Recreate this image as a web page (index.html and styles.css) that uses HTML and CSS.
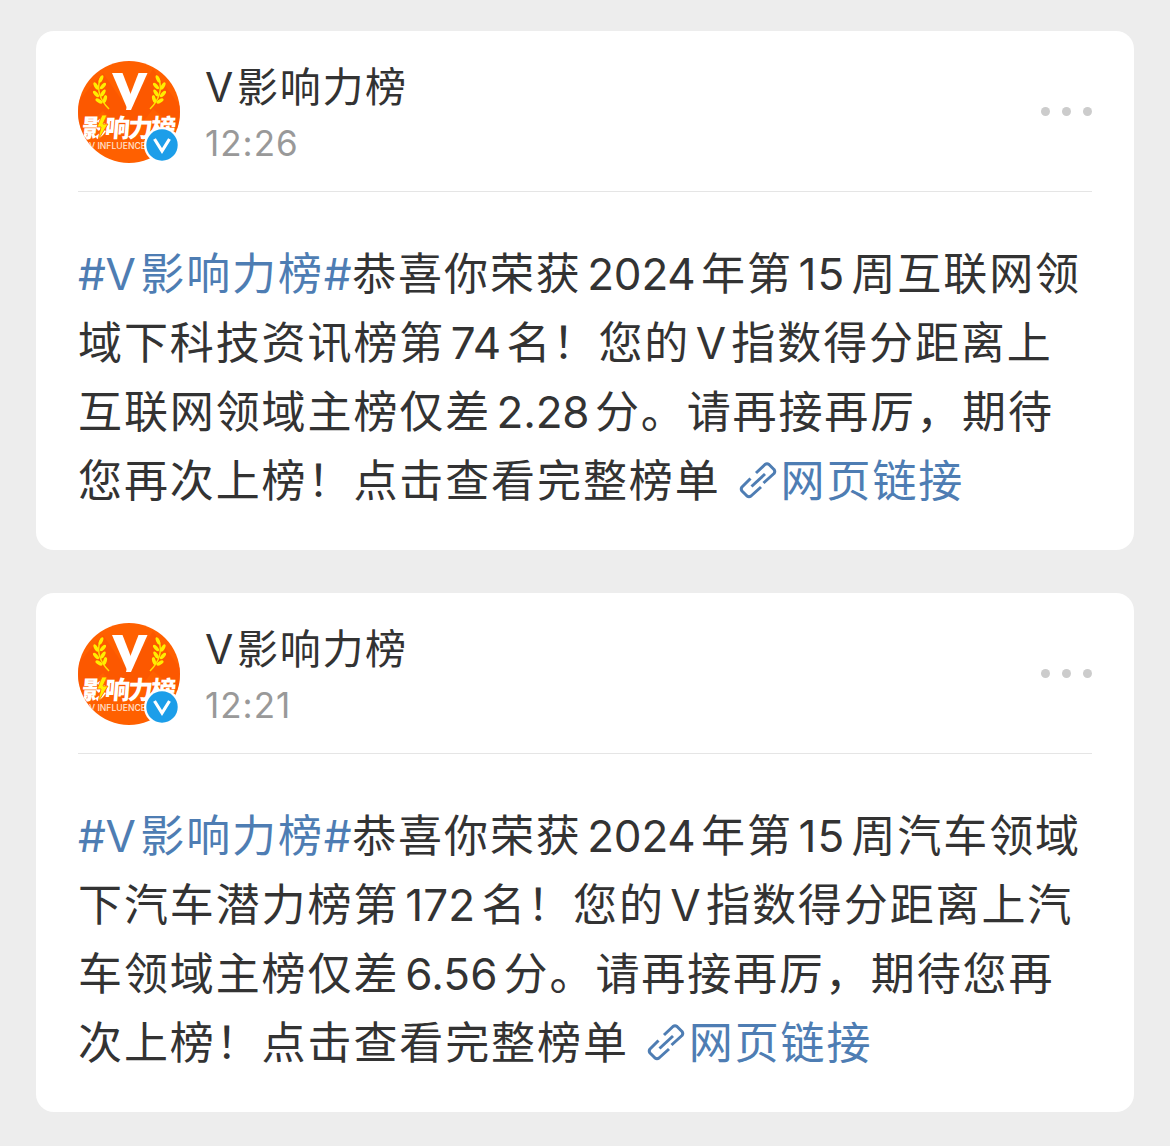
FILE: index.html
```html
<!DOCTYPE html>
<html lang="zh-CN">
<head>
  <meta charset="UTF-8">
  <meta name="viewport" content="width=device-width, initial-scale=1.0">
  <title>V影响力榜</title>
  <link rel="stylesheet" href="styles.css">
</head>
<body>
  <!-- Shared icons -->
  <svg class="symbols" width="0" height="0">
    <symbol id="avatar" viewBox="0 0 102 102">
      <clipPath id="round"><circle cx="51" cy="51" r="51"/></clipPath>
      <g clip-path="url(#round)">
        <rect width="102" height="102" fill="#ff6000"/>
        <path d="M0 40 25 12 50 48 75 8 102 45V70L75 48 50 80 25 50 0 72Z" fill="#fa5400" opacity=".6"/>
        <path d="M34 12H44.500L53 34 49 47Z" fill="#fff"/>
        <path d="M60.500 12H69.500L53 49H48L50.500 38Z" fill="#fff"/>
        <g id="wheat">
          <path d="M22 18Q17 34 31 48" stroke="#ffe000" stroke-width="1.5" fill="none"/>
          <g fill="#ffee00">
            <ellipse cx="23" cy="18" rx="1.800" ry="4" transform="rotate(25 23 18)"/>
            <ellipse cx="18" cy="25" rx="1.800" ry="4" transform="rotate(-30 18 25)"/>
            <ellipse cx="25" cy="25" rx="1.800" ry="4" transform="rotate(42 25 25)"/>
            <ellipse cx="18" cy="33" rx="1.800" ry="4" transform="rotate(-42 18 33)"/>
            <ellipse cx="25" cy="32" rx="1.800" ry="4" transform="rotate(32 25 32)"/>
            <ellipse cx="21" cy="40" rx="1.800" ry="4" transform="rotate(-58 21 40)"/>
            <ellipse cx="27" cy="38" rx="1.800" ry="4" transform="rotate(15 27 38)"/>
          </g>
        </g>
        <use href="#wheat" transform="translate(103 0) scale(-1 1)"/>
        <text class="logo-name" x="5" y="76" textLength="94" transform="translate(5 0) skewX(-5)">影响力榜</text>
        <path d="M24 54 19 66H23L20 79 30 63H25L29 54Z" fill="#ffee00" stroke="#ff6000" stroke-width=".8"/>
        <text class="logo-sub" x="11" y="87.5" textLength="57" lengthAdjust="spacingAndGlyphs">V INFLUENCE</text>
      </g>
    </symbol>
    <symbol id="verified" viewBox="0 0 36 36">
      <circle cx="18" cy="18" r="18" fill="#fff"/>
      <circle cx="18" cy="18" r="15.7" fill="#1c9ee9"/>
      <path d="M10.500 12 18 24 25.500 12" fill="none" stroke="#fff" stroke-width="3.2"/>
    </symbol>
    <symbol id="link" viewBox="0 0 38 38">
      <g fill="none" stroke="#4e7db3" stroke-width="3" stroke-linejoin="round">
        <path d="M17 12 26 3.500Q28 2 30 3.500L35 8.500Q36.500 10.500 35 12.500L24.500 22"/>
        <path d="M11.500 17.500 3 26Q1.500 28 3 30L8 35Q10 36.500 12 35L22 26"/>
        <path d="M12.500 25.500 26 13"/>
      </g>
    </symbol>
  </svg>

  <div class="feed">
    <div class="card">
      <div class="header">
        <div class="avatar">
          <svg class="photo"><use href="#avatar"/></svg>
          <svg class="badge"><use href="#verified"/></svg>
        </div>
        <div class="user">
          <div class="name"><span>V</span>影响力榜</div>
          <div class="time">12:26</div>
        </div>
        <div class="more"><i></i><i></i><i></i></div>
      </div>
      <p class="content">
        <a class="topic"><span class="hash">#</span><span class="v-first">V</span>影响力榜<span class="hash">#</span></a>恭喜你荣获<span class="num">2024</span>年第<span class="num week">15</span>周互联网领<br>
        域下科技资讯榜第<span class="num">74</span>名！您的<span class="num">V</span>指数得分距离上<br>
        互联网领域主榜仅差<span class="num">2.28</span>分。请再接再厉，期待<br>
        您再次上榜！点击查看完整榜单<a class="link"><svg><use href="#link"/></svg>网页链接</a>
      </p>
    </div>

    <div class="card">
      <div class="header">
        <div class="avatar">
          <svg class="photo"><use href="#avatar"/></svg>
          <svg class="badge"><use href="#verified"/></svg>
        </div>
        <div class="user">
          <div class="name"><span>V</span>影响力榜</div>
          <div class="time">12:21</div>
        </div>
        <div class="more"><i></i><i></i><i></i></div>
      </div>
      <p class="content">
        <a class="topic"><span class="hash">#</span><span class="v-first">V</span>影响力榜<span class="hash">#</span></a>恭喜你荣获<span class="num">2024</span>年第<span class="num week">15</span>周汽车领域<br>
        下汽车潜力榜第<span class="num wide">172</span>名！您的<span class="num">V</span>指数得分距离上汽<br>
        车领域主榜仅差<span class="num wide">6.56</span>分。请再接再厉，期待您再<br>
        次上榜！点击查看完整榜单<a class="link"><svg><use href="#link"/></svg>网页链接</a>
      </p>
    </div>
  </div>
</body>
</html>
```
FILE: styles.css
```css
body {
  margin: 0;
  background-color: #ededed;
  font-family: Inter, "Noto Sans CJK SC", sans-serif;
  color: #333;
}

.symbols {
  display: block;
}

.feed {
  display: flex;
  flex-direction: column;
  gap: 43px;
  padding: 31px 36px 34px;
}

.card {
  box-sizing: border-box;
  height: 519px;
  padding: 0 42px;
  background: #fff;
  border-radius: 18px;
}

.header {
  display: flex;
  box-sizing: border-box;
  height: 161px;
  padding-top: 30px;
  border-bottom: 1px solid #e5e5e5;
}

.avatar {
  position: relative;
  width: 102px;
  height: 102px;
}

.photo {
  display: block;
  width: 102px;
  height: 102px;
}

/* Verified mark over the avatar */
.badge {
  position: absolute;
  left: 66px;
  top: 66px;
  width: 36px;
  height: 36px;
}

.logo-name {
  font: 900 25px "Noto Sans CJK SC", sans-serif;
  fill: #fff;
}

.logo-sub {
  font: 500 8.500px Inter, sans-serif;
  fill: #ffe3d0;
}

.user {
  flex: 1;
  margin-left: 25px;
}

.name {
  height: 54px;
  line-height: 52px;
  font-size: 41px;
  letter-spacing: 1.7px;
  white-space: nowrap;
}

.name span {
  margin-right: 2px;
}

.time {
  line-height: 56px;
  font-size: 35px;
  letter-spacing: 1px;
  color: #999;
}

.more {
  display: flex;
  gap: 12px;
  margin-top: 46px;
}

.more i {
  width: 9px;
  height: 9px;
  border-radius: 50%;
  background: #ccc;
}

.content {
  margin: 48px 0 0;
  font-size: 44px;
  line-height: 69px;
  letter-spacing: 1.9px;
  white-space: nowrap;
}

.topic, .link {
  color: #4e7db3;
}

.num {
  margin: 0 5.500px;
  letter-spacing: -0.2px;
}

.wide {
  margin: 0 6px;
  letter-spacing: 0.1px;
}

.week {
  margin-right: 6px;
  letter-spacing: 1.2px;
}

.hash {
  letter-spacing: -0.5px;
}

.v-first {
  margin-right: 4.500px;
  letter-spacing: 0;
}

.topic .hash:last-child {
  letter-spacing: 0.5px;
}

.link svg {
  width: 38px;
  height: 38px;
  margin: 0 4px 0 18px;
  vertical-align: -2px;
}
```
